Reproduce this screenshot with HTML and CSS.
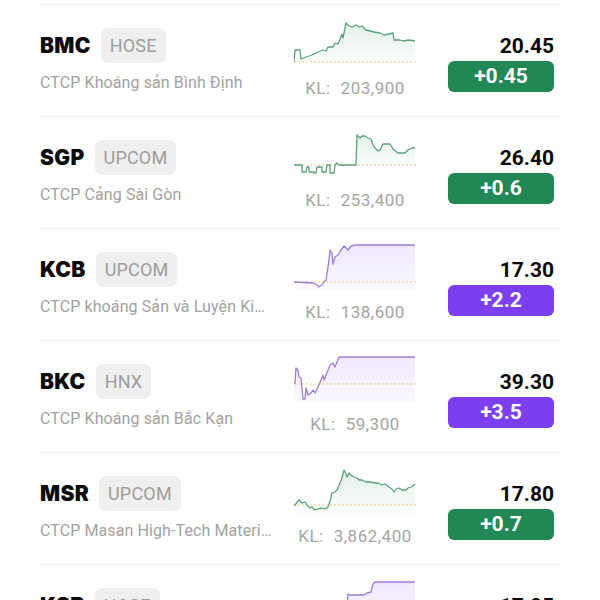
FILE: index.html
```html
<!DOCTYPE html>
<html lang="vi">
<head>
<meta charset="utf-8">
<title>Cổ phiếu khoáng sản</title>
<link rel="stylesheet" href="styles.css">
</head>
<body>
<div class="list">

  <div class="row">
    <div class="info">
      <div class="head"><span class="ticker">BMC</span><span class="exch">HOSE</span></div>
      <div class="name">CTCP Khoáng sản Bình Định</div>
    </div>
    <div class="spark">
      <svg class="chart up" viewBox="0 0 122 46" width="122" height="46">
        <defs><linearGradient id="f1" x1="0" y1="0" x2="0" y2="1"><stop offset="0" stop-color="#2a8f5c" stop-opacity="0.13"/><stop offset="1" stop-color="#2a8f5c" stop-opacity="0.02"/></linearGradient></defs>
        <path class="area" fill="url(#f1)" d="M0 42 L1 30 L6 30 L7 39 L12 37 L18 35 L24 32 L29 30 L32 31 L34 27 L39 27 L41 23 L44 24 L48 14 L49 18 L52 3 L55 6 L58 7 L62 5 L65 7 L68 6 L72 10 L76 11 L80 12 L86 13 L90 15 L95 14 L99 13 L100 20 L106 20 L109 21 L115 20 L121 21 L121 42 Z"/>
        <line class="ref" x1="0" y1="42" x2="122" y2="42"/>
        <path class="line" d="M0 42 L1 30 L6 30 L7 39 L12 37 L18 35 L24 32 L29 30 L32 31 L34 27 L39 27 L41 23 L44 24 L48 14 L49 18 L52 3 L55 6 L58 7 L62 5 L65 7 L68 6 L72 10 L76 11 L80 12 L86 13 L90 15 L95 14 L99 13 L100 20 L106 20 L109 21 L115 20 L121 21"/>
      </svg>
      <div class="vol"><span class="vol-label">KL:</span>203,900</div>
    </div>
    <div class="quote">
      <div class="price">20.45</div>
      <div class="chg up">+0.45</div>
    </div>
  </div>

  <div class="row">
    <div class="info">
      <div class="head"><span class="ticker">SGP</span><span class="exch">UPCOM</span></div>
      <div class="name">CTCP Cảng Sài Gòn</div>
    </div>
    <div class="spark">
      <svg class="chart up" viewBox="0 0 122 46" width="122" height="46">
        <defs><linearGradient id="f2" x1="0" y1="0" x2="0" y2="1"><stop offset="0" stop-color="#2a8f5c" stop-opacity="0.13"/><stop offset="1" stop-color="#2a8f5c" stop-opacity="0.02"/></linearGradient></defs>
        <path class="area" fill="url(#f2)" d="M62 33 L63 3 L66 6 L68 4 L71 4 L74 6 L77 7 L79 13 L81 16 L84 19 L86 18 L89 12 L96 12 L99 17 L104 21 L111 21 L114 18 L118 16 L121 16 L121 33 Z"/>
        <line class="ref" x1="0" y1="33" x2="122" y2="33"/>
        <path class="line" d="M0 33 L8 33 L8 40 L12 40 L13 35 L15 35 L15 40 L20 40 L20 41 L22 41 L23 35 L28 35 L28 40 L32 40 L33 33 L36 33 L36 41 L40 41 L41 33 L43 31 L45 33 L62 33 L63 3 L66 6 L68 4 L71 4 L74 6 L77 7 L79 13 L81 16 L84 19 L86 18 L89 12 L96 12 L99 17 L104 21 L111 21 L114 18 L118 16 L121 16"/>
      </svg>
      <div class="vol"><span class="vol-label">KL:</span>253,400</div>
    </div>
    <div class="quote">
      <div class="price">26.40</div>
      <div class="chg up">+0.6</div>
    </div>
  </div>

  <div class="row">
    <div class="info">
      <div class="head"><span class="ticker">KCB</span><span class="exch">UPCOM</span></div>
      <div class="name">CTCP khoáng Sản và Luyện Kim Cao Bằng</div>
    </div>
    <div class="spark">
      <svg class="chart ceil" viewBox="0 0 122 46" width="122" height="46">
        <defs><linearGradient id="f3" x1="0" y1="0" x2="0" y2="1"><stop offset="0" stop-color="#8a55ee" stop-opacity="0.14"/><stop offset="1" stop-color="#8a55ee" stop-opacity="0.04"/></linearGradient></defs>
        <path class="area" fill="url(#f3)" d="M0 38 L1 38 L19 39 L23 41 L25 43 L28 41 L30 38 L32 36 L35 16 L36 6 L38 9 L39 20 L41 13 L44 11 L47 6 L50 2 L54 6 L57 2 L62 1 L121 1 L121 46 L0 46 Z"/>
        <line class="ref" x1="0" y1="38" x2="122" y2="38"/>
        <path class="line" d="M0 38 L1 38 L19 39 L23 41 L25 43 L28 41 L30 38 L32 36 L35 16 L36 6 L38 9 L39 20 L41 13 L44 11 L47 6 L50 2 L54 6 L57 2 L62 1 L121 1"/>
      </svg>
      <div class="vol"><span class="vol-label">KL:</span>138,600</div>
    </div>
    <div class="quote">
      <div class="price">17.30</div>
      <div class="chg ceil">+2.2</div>
    </div>
  </div>

  <div class="row">
    <div class="info">
      <div class="head"><span class="ticker">BKC</span><span class="exch">HNX</span></div>
      <div class="name">CTCP Khoáng sản Bắc Kạn</div>
    </div>
    <div class="spark">
      <svg class="chart ceil" viewBox="0 0 122 46" width="122" height="46">
        <defs><linearGradient id="f4" x1="0" y1="0" x2="0" y2="1"><stop offset="0" stop-color="#8a55ee" stop-opacity="0.14"/><stop offset="1" stop-color="#8a55ee" stop-opacity="0.04"/></linearGradient></defs>
        <path class="area" fill="url(#f4)" d="M0 27 L1 27 L2 12 L4 14 L5 21 L7 22 L9 43 L11 43 L12 32 L14 39 L17 37 L19 34 L21 37 L24 31 L27 24 L29 19 L30 24 L34 14 L36 9 L39 7 L41 11 L45 1 L121 1 L121 46 L0 46 Z"/>
        <line class="ref" x1="0" y1="28" x2="122" y2="28"/>
        <path class="line" d="M0 27 L1 27 L2 12 L4 14 L5 21 L7 22 L9 43 L11 43 L12 32 L14 39 L17 37 L19 34 L21 37 L24 31 L27 24 L29 19 L30 24 L34 14 L36 9 L39 7 L41 11 L45 1 L121 1"/>
      </svg>
      <div class="vol"><span class="vol-label">KL:</span>59,300</div>
    </div>
    <div class="quote">
      <div class="price">39.30</div>
      <div class="chg ceil">+3.5</div>
    </div>
  </div>

  <div class="row">
    <div class="info">
      <div class="head"><span class="ticker">MSR</span><span class="exch">UPCOM</span></div>
      <div class="name">CTCP Masan High-Tech Materials</div>
    </div>
    <div class="spark">
      <svg class="chart up" viewBox="0 0 122 46" width="122" height="46">
        <defs><linearGradient id="f5" x1="0" y1="0" x2="0" y2="1"><stop offset="0" stop-color="#2a8f5c" stop-opacity="0.13"/><stop offset="1" stop-color="#2a8f5c" stop-opacity="0.02"/></linearGradient></defs>
        <path class="area" fill="url(#f5)" d="M0 37 L1 37 L5 32 L8 35 L11 34 L13 37 L16 40 L18 39 L21 42 L24 41 L28 40 L31 41 L34 39 L36 33 L38 25 L41 24 L43 22 L46 15 L48 10 L50 2 L52 6 L53 9 L55 5 L58 8 L60 9 L63 10 L65 12 L68 12 L72 14 L76 14 L81 15 L84 15 L88 17 L91 16 L95 19 L98 21 L100 24 L102 21 L105 20 L108 22 L112 22 L114 20 L117 19 L119 18 L121 16 L121 46 L0 46 Z"/>
        <line class="ref" x1="0" y1="37" x2="122" y2="37"/>
        <path class="line" d="M0 37 L1 37 L5 32 L8 35 L11 34 L13 37 L16 40 L18 39 L21 42 L24 41 L28 40 L31 41 L34 39 L36 33 L38 25 L41 24 L43 22 L46 15 L48 10 L50 2 L52 6 L53 9 L55 5 L58 8 L60 9 L63 10 L65 12 L68 12 L72 14 L76 14 L81 15 L84 15 L88 17 L91 16 L95 19 L98 21 L100 24 L102 21 L105 20 L108 22 L112 22 L114 20 L117 19 L119 18 L121 16"/>
      </svg>
      <div class="vol"><span class="vol-label">KL:</span>3,862,400</div>
    </div>
    <div class="quote">
      <div class="price">17.80</div>
      <div class="chg up">+0.7</div>
    </div>
  </div>

  <div class="row">
    <div class="info">
      <div class="head"><span class="ticker">KSB</span><span class="exch">HOSE</span></div>
      <div class="name">CTCP Khoáng sản và Xây dựng Bình Dương</div>
    </div>
    <div class="spark">
      <svg class="chart ceil" viewBox="0 0 122 46" width="122" height="46">
        <defs><linearGradient id="f6" x1="0" y1="0" x2="0" y2="1"><stop offset="0" stop-color="#8a55ee" stop-opacity="0.14"/><stop offset="1" stop-color="#8a55ee" stop-opacity="0.04"/></linearGradient></defs>
        <path class="area" fill="url(#f6)" d="M0 40 L52 40 L54 14 L56 15 L62 15 L70 15 L73 13 L77 12 L79 4 L81 2 L121 2 L121 46 L0 46 Z"/>
        <line class="ref" x1="0" y1="36" x2="122" y2="36"/>
        <path class="line" d="M0 40 L52 40 L54 14 L56 15 L62 15 L70 15 L73 13 L77 12 L79 4 L81 2 L121 2"/>
      </svg>
      <div class="vol"><span class="vol-label">KL:</span>412,500</div>
    </div>
    <div class="quote">
      <div class="price">17.05</div>
      <div class="chg ceil">+1.1</div>
    </div>
  </div>

</div>
</body>
</html>
```

FILE: styles.css
```css
html, body {
  margin: 0;
  overflow: hidden;
  background: #ffffff;
}

body {
  font-family: Roboto, "Liberation Sans", sans-serif;
  color: #111111;
}

.list {
  padding: 4px 40px 0;
}

/* one stock per row: name column, intraday chart, price + change */
.row {
  display: grid;
  grid-template-columns: 254px 122px 1fr;
  height: 112px;
  box-sizing: border-box;
  border-top: 1px solid #ebebeb;
}

.info {
  padding-top: 23px;
  min-width: 0;
}

.head {
  display: flex;
  align-items: center;
  gap: 10px;
  height: 35px;
}

.ticker {
  font-family: Inter, Roboto, sans-serif;
  font-weight: 900;
  font-size: 21px;
  letter-spacing: 0.3px;
  color: #0a0a0a;
}

.exch {
  height: 35px;
  line-height: 35px;
  padding: 0 9px;
  border-radius: 7px;
  background: #efefef;
  color: #9d9d9d;
  font-size: 18px;
  letter-spacing: 0.2px;
}

.name {
  margin-top: 10px;
  width: 232px;
  line-height: 20px;
  font-size: 16px;
  letter-spacing: 0.1px;
  color: #a2a2a2;
  white-space: nowrap;
  overflow: hidden;
  text-overflow: ellipsis;
}

/* sparkline */
.spark {
  padding-top: 15px;
}

.chart {
  display: block;
}

.chart .line {
  fill: none;
  stroke-width: 1.3;
  stroke-linejoin: round;
}

.chart.up .line {
  stroke: #5c9f7d;
}

.chart.ceil .line {
  stroke: #9a7ddc;
}

.chart .ref {
  stroke: #f1c77a;
  stroke-width: 1;
  stroke-dasharray: 2 2;
}

.vol {
  margin-top: 12px;
  text-align: center;
  line-height: 20px;
  font-size: 17px;
  letter-spacing: 0.5px;
  color: #a5a5a5;
  white-space: nowrap;
}

.vol-label {
  margin-right: 10px;
}

/* price and change chip */
.quote {
  display: flex;
  flex-direction: column;
  align-items: flex-end;
  padding: 29px 6px 0 0;
}

.price {
  line-height: 24px;
  font-size: 21px;
  font-weight: 700;
  color: #0a0a0a;
}

.chg {
  margin-top: 3px;
  width: 106px;
  height: 31px;
  line-height: 31px;
  border-radius: 6px;
  text-align: center;
  color: #ffffff;
  font-size: 21px;
  font-weight: 700;
}

.chg.up {
  background: #218755;
}

.chg.ceil {
  background: #7b3ff0;
}
```
